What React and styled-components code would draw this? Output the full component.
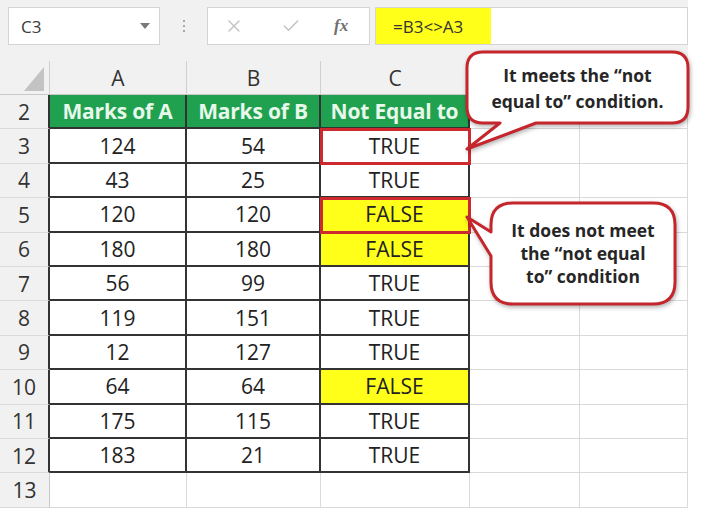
import styled, { createGlobalStyle } from "styled-components";
import { X, Check } from "lucide-react";

const GlobalStyle = createGlobalStyle`
  body {
    margin: 0;
    background: #ffffff;
    font-family: "Open Sans", "Noto Sans", sans-serif;
  }
`;

const Page = styled.div`
  position: relative;
  width: 701px;
  height: 511px;
  overflow: hidden;
  background: #ffffff;
`;

const Toolbar = styled.div`
  width: 688px;
  height: 61px;
  box-sizing: border-box;
  padding: 7px 0 0 8px;
  background: #f1f1f1;
  display: flex;
  align-items: flex-start;
`;

const NameBox = styled.div`
  width: 152px;
  height: 38px;
  box-sizing: border-box;
  background: #fff;
  border: 1px solid #d4d4d4;
  display: flex;
  align-items: center;
  justify-content: space-between;
  padding: 0 9px 0 12px;
  font-size: 17px;
  color: #3a3a3a;
`;

const Arrow = styled.span`
  width: 0;
  height: 0;
  border-left: 5px solid transparent;
  border-right: 5px solid transparent;
  border-top: 6px solid #7a7a7a;
`;

const Grip = styled.div`
  width: 47px;
  height: 38px;
  display: flex;
  flex-direction: column;
  align-items: center;
  justify-content: center;
  gap: 3px;

  span {
    width: 2px;
    height: 2px;
    background: #a8a8a8;
  }
`;

const FxBox = styled.div`
  width: 163px;
  height: 38px;
  box-sizing: border-box;
  background: #fff;
  border: 1px solid #d4d4d4;
  display: flex;
  align-items: center;
  padding-left: 16px;
  color: #c2c2c2;
`;

const Fx = styled.span`
  margin-left: 33px;
  font-family: "Liberation Serif", serif;
  font-style: italic;
  font-weight: bold;
  font-size: 17px;
  color: #6f6f6f;
`;

const FormulaBox = styled.div`
  margin-left: 5px;
  width: 313px;
  height: 38px;
  box-sizing: border-box;
  background: #fff;
  border: 1px solid #d4d4d4;
  display: flex;
`;

const Formula = styled.div`
  width: 115px;
  background: #ffff1a;
  display: flex;
  align-items: center;
  padding-left: 17px;
  box-sizing: border-box;
  font-size: 17px;
  color: #333;
`;

const Sheet = styled.div`
  width: 688px;
  display: grid;
  grid-template-columns: 50px 137px 134px 149px 110px 108px;
  grid-template-rows: 34px repeat(12, 34.4px);
`;

const Cell = styled.div`
  box-sizing: border-box;
  display: flex;
  align-items: center;
  justify-content: center;
  font-size: 21px;
  color: #222;
  white-space: nowrap;
  background: ${({ $fill }) => $fill || "#fff"};
  border-right: ${({ $table }) => ($table ? "2px solid #333" : "1px solid #d9d9d9")};
  border-bottom: ${({ $table }) => ($table ? "2px solid #333" : "1px solid #d9d9d9")};
  ${({ $marked }) =>
    $marked &&
    `
    position: relative;
    z-index: 1;
    outline: 3px solid #cc2a2e;
    outline-offset: -2px;
  `}
`;

const GreenCell = styled(Cell)`
  background: #1fa150;
  color: #e8f8ea;
  font-weight: bold;
  letter-spacing: -0.2px;
`;

const HeadCell = styled.div`
  box-sizing: border-box;
  display: flex;
  align-items: center;
  justify-content: center;
  background: #f1f1f1;
  font-size: 21px;
  color: #333;
  border-right: 1px solid #d0d0d0;
  border-bottom: 1px solid #c9c9c9;
`;

const RowHead = styled(HeadCell)`
  border-right: ${({ $inTable }) => ($inTable ? "2px solid #333" : "1px solid #c9c9c9")};
  border-bottom: 1px solid #dadada;
`;

const Corner = styled(HeadCell)`
  align-items: flex-end;
  justify-content: flex-end;
  padding: 0 5px 3px 0;

  span {
    width: 20px;
    height: 24px;
    background: #c3c3c3;
    clip-path: polygon(100% 0, 100% 100%, 0 100%);
  }
`;

const CalloutBox = styled.div`
  position: absolute;
  left: ${({ $x }) => $x}px;
  top: ${({ $y }) => $y}px;
  width: ${({ $w }) => $w}px;
  height: ${({ $h }) => $h}px;
  z-index: 5;

  svg {
    display: block;
    filter: drop-shadow(1px 2px 2px rgba(0, 0, 0, 0.3));
  }
`;

const CalloutText = styled.div`
  position: absolute;
  left: ${({ $x }) => $x}px;
  top: ${({ $y }) => $y}px;
  width: ${({ $w }) => $w}px;
  height: ${({ $h }) => $h}px;
  display: flex;
  align-items: center;
  justify-content: center;
  text-align: center;
  font-size: 17.5px;
  font-weight: bold;
  line-height: ${({ $lh }) => $lh}px;
  color: #262626;
`;

const rows = [
  [124, 54, "TRUE"],
  [43, 25, "TRUE"],
  [120, 120, "FALSE"],
  [180, 180, "FALSE"],
  [56, 99, "TRUE"],
  [119, 151, "TRUE"],
  [12, 127, "TRUE"],
  [64, 64, "FALSE"],
  [175, 115, "TRUE"],
  [183, 21, "TRUE"],
];

const Callout = ({ x, y, w, h, path, text, lh }) => (
  <CalloutBox $x={x} $y={y} $w={w} $h={h}>
    <svg width={w} height={h} viewBox={`0 0 ${w} ${h}`}>
      <path d={path} fill="#fff" stroke="#c4262c" strokeWidth="3" strokeLinejoin="round" />
    </svg>
    <CalloutText $x={text.x} $y={text.y} $w={text.w} $h={text.h} $lh={lh}>
      <div>{text.lines.map((l, i) => <div key={i}>{l}</div>)}</div>
    </CalloutText>
  </CalloutBox>
);

export default function App() {
  return (
    <Page>
      <GlobalStyle />
      <Toolbar>
        <NameBox>
          C3
          <Arrow />
        </NameBox>
        <Grip>
          <span />
          <span />
          <span />
        </Grip>
        <FxBox>
          <X size={20} strokeWidth={1.6} />
          <Check size={20} strokeWidth={1.8} style={{ marginLeft: 37 }} />
          <Fx>fx</Fx>
        </FxBox>
        <FormulaBox>
          <Formula>=B3&lt;&gt;A3</Formula>
        </FormulaBox>
      </Toolbar>

      <Sheet>
        <Corner>
          <span />
        </Corner>
        {["A", "B", "C", "", ""].map((c, i) => (
          <HeadCell key={i}>{c}</HeadCell>
        ))}

        <RowHead $inTable>2</RowHead>
        <GreenCell $table>Marks of A</GreenCell>
        <GreenCell $table>Marks of B</GreenCell>
        <GreenCell $table>Not Equal to</GreenCell>
        <Cell />
        <Cell />

        {rows.map(([a, b, c], i) => (
          <>
            <RowHead key={`h${i}`} $inTable>{i + 3}</RowHead>
            <Cell key={`a${i}`} $table>{a}</Cell>
            <Cell key={`b${i}`} $table>{b}</Cell>
            <Cell
              key={`c${i}`}
              $table
              $fill={c === "FALSE" ? "#ffff1a" : undefined}
              $marked={i === 0 || i === 2}
            >
              {c}
            </Cell>
            <Cell key={`d${i}`} />
            <Cell key={`e${i}`} />
          </>
        ))}

        <RowHead>13</RowHead>
        <Cell />
        <Cell />
        <Cell />
        <Cell />
        <Cell />
      </Sheet>

      <Callout
        x={462}
        y={48}
        w={230}
        h={106}
        lh={26}
        path="M21,4 H210 Q226,4 226,20 V59 Q226,75 210,75 H74 L5,101 L38,75 H21 Q5,75 5,59 V20 Q5,4 21,4 Z"
        text={{ x: 5, y: 4, w: 221, h: 71, lines: ["It meets the \u201cnot", "equal to\u201d condition."] }}
      />
      <Callout
        x={462}
        y={198}
        w={220}
        h={112}
        lh={23}
        path="M51,5 H191 Q213,5 213,27 V84 Q213,106 191,106 H51 Q29,106 29,84 V58 L5,19 L29,34 V27 Q29,5 51,5 Z"
        text={{ x: 29, y: 5, w: 184, h: 101, lines: ["It does not meet", "the \u201cnot equal", "to\u201d condition"] }}
      />
    </Page>
  );
}
